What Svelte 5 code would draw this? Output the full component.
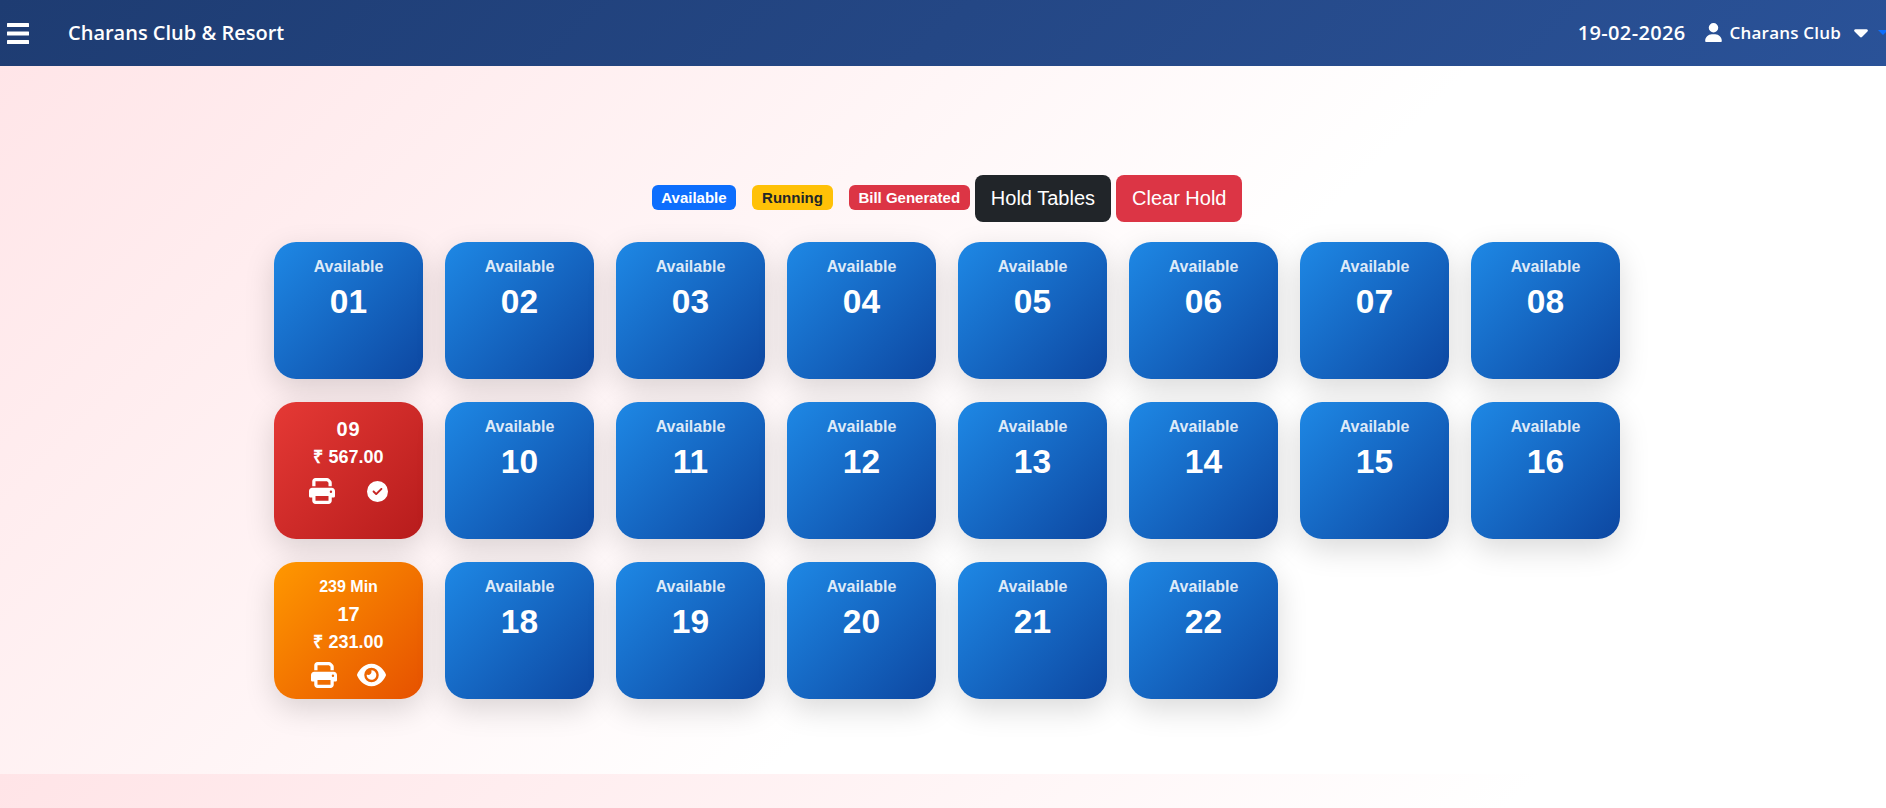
<script>
  const pad = (n) => String(n).padStart(2, '0');
  const tables = Array.from({ length: 22 }, (_, i) => i + 1);
  const print = 'M128 0C92.7 0 64 28.7 64 64v96h64V64H354.7L384 93.3V160h64V93.3c0-17-6.7-33.3-18.7-45.3L400 18.7C388 6.7 371.7 0 354.7 0H128zM384 352v32 64H128V384 368 352H384zm64 32h32c17.7 0 32-14.3 32-32V256c0-35.3-28.7-64-64-64H64c-35.3 0-64 28.7-64 64v96c0 17.7 14.3 32 32 32H64v64c0 35.3 28.7 64 64 64H384c35.3 0 64-28.7 64-64V384zM432 248a24 24 0 1 1 0 48 24 24 0 1 1 0-48z';
  const eye = 'M288 32c-80.8 0-145.5 36.8-192.6 80.6C48.6 156 17.3 208 2.5 243.7c-3.3 7.9-3.3 16.7 0 24.6C17.3 304 48.6 356 95.4 399.4C142.5 443.2 207.2 480 288 480s145.5-36.8 192.6-80.6c46.8-43.5 78.1-95.4 93-131.1c3.3-7.9 3.3-16.7 0-24.6c-14.9-35.7-46.2-87.7-93-131.1C433.5 68.8 368.8 32 288 32zM144 256a144 144 0 1 1 288 0 144 144 0 1 1 -288 0zm144-64c0 35.3-28.7 64-64 64c-7.1 0-13.9-1.2-20.3-3.3c-5.5-1.8-11.9 1.6-11.7 7.4c.3 6.9 1.3 13.8 3.2 20.7c13.7 51.2 66.4 81.6 117.6 67.9s81.6-66.4 67.9-117.6c-11.1-41.5-47.8-69.4-88.6-71.1c-5.8-.2-9.2 6.1-7.4 11.7c2.1 6.4 3.3 13.2 3.3 20.3z';
  const check = 'M256 512A256 256 0 1 0 256 0a256 256 0 1 0 0 512zM369 209L241 337c-9.4 9.4-24.6 9.4-33.9 0l-64-64c-9.4-9.4-9.4-24.6 0-33.9s24.6-9.4 33.9 0l47 47L335 175c9.4-9.4 24.6-9.4 33.9 0s9.4 24.6 0 33.9z';
</script>

<header class="topbar">
  <div class="brand">
    <svg class="menu" viewBox="0 0 22 21" aria-hidden="true">
      <rect y="0" width="22" height="4" rx="0.5" />
      <rect y="8.5" width="22" height="4" rx="0.5" />
      <rect y="17" width="22" height="4" rx="0.5" />
    </svg>
    <span class="title">Charans Club &amp; Resort</span>
  </div>
  <div class="account">
    <span class="date">19-02-2026</span>
    <svg class="user" viewBox="0 0 448 512" aria-hidden="true"><path d="M224 256A128 128 0 1 0 224 0a128 128 0 1 0 0 256zm-45.7 48C79.8 304 0 383.8 0 482.3C0 498.7 13.3 512 29.7 512H418.3c16.4 0 29.7-13.3 29.7-29.7C448 383.8 368.2 304 269.7 304H178.3z" /></svg>
    <span class="name">Charans Club</span>
    <svg class="caret" viewBox="0 0 320 512" aria-hidden="true"><path d="M137.4 374.6c12.5 12.5 32.8 12.5 45.3 0l128-128c9.2-9.2 11.9-22.9 6.9-34.9s-16.6-19.8-29.6-19.8L32 192c-12.9 0-24.6 7.8-29.6 19.8s-2.2 25.7 6.9 34.9l128 128z" /></svg>
    <span class="toggle"></span>
  </div>
</header>

<main class="floor">
  <div class="legend">
    <span class="badge blue">Available</span>
    <span class="badge yellow">Running</span>
    <span class="badge red">Bill Generated</span>
    <button class="btn dark">Hold Tables</button>
    <button class="btn danger">Clear Hold</button>
  </div>

  <div class="grid">
    {#each tables as t}
      {#if t === 9}
        <div class="card billed">
          <div class="mid first">{pad(t)}</div>
          <div class="amount">₹ 567.00</div>
          <div class="icons wide">
            <svg class="ic" viewBox="0 0 512 512" aria-hidden="true"><path d={print} /></svg>
            <svg class="ok" viewBox="0 0 512 512" aria-hidden="true"><path d={check} /></svg>
          </div>
        </div>
      {:else if t === 17}
        <div class="card running">
          <div class="status">239 Min</div>
          <div class="mid second">{t}</div>
          <div class="amount">₹ 231.00</div>
          <div class="icons">
            <svg class="ic" viewBox="0 0 512 512" aria-hidden="true"><path d={print} /></svg>
            <svg class="ic eye" viewBox="0 0 576 512" aria-hidden="true"><path d={eye} /></svg>
          </div>
        </div>
      {:else}
        <div class="card free">
          <div class="status soft">Available</div>
          <div class="num">{pad(t)}</div>
        </div>
      {/if}
    {/each}
  </div>
</main>

<style>
  :global(body) {
    margin: 0;
    font-family: "Liberation Sans", Arial, sans-serif;
    background: linear-gradient(135deg, #ffe4e7 0%, #ffffff 58%);
  }
  .topbar {
    height: 66px;
    box-sizing: border-box;
    display: flex;
    align-items: center;
    justify-content: space-between;
    padding: 0 0 2px 7px;
    overflow: hidden;
    background: linear-gradient(135deg, #1e3c72, #2a5298);
    color: #fff;
    font-family: "Open Sans", "Noto Sans", sans-serif;
    font-weight: 600;
  }
  .brand { display: flex; align-items: center; }
  .menu { width: 22px; height: 21px; fill: #fff; margin: 2px 39px 0 0; }
  .title { font-size: 20px; }
  .account { display: flex; align-items: center; flex: none; margin-right: -2px; }
  .date { font-size: 20px; letter-spacing: 0.35px; margin-right: 19px; }
  .user { width: 17px; height: 19px; fill: #fff; margin-right: 8px; }
  .name { font-size: 17px; letter-spacing: 0.2px; margin-right: 13px; }
  .caret { width: 14px; height: 22px; fill: #fff; margin-right: 10px; }
  .toggle {
    width: 0;
    height: 0;
    border-top: 5.5px solid #0d6efd;
    border-left: 5.5px solid transparent;
    border-right: 5.5px solid transparent;
  }
  .floor {
    height: 708px;
    box-sizing: border-box;
    padding: 109px 0 0 8px;
  }
  .legend {
    display: flex;
    align-items: center;
    justify-content: center;
    gap: 5px;
    margin-bottom: 20px;
  }
  .badge {
    font-size: 15px;
    font-weight: 700;
    line-height: 25px;
    padding: 0 9.75px;
    border-radius: 6px;
    color: #fff;
    margin: 0 11px 2px 0;
  }
  .badge.red { margin-right: 0; }
  .blue { background: #0d6efd; }
  .yellow { background: #ffc107; color: #212529; }
  .red { background: #dc3545; }
  .btn {
    font-family: inherit;
    font-size: 20px;
    line-height: 30px;
    padding: 8px 16px 9px;
    border: 0;
    border-radius: 8px;
    color: #fff;
  }
  .dark { background: #212529; }
  .danger { background: #dc3545; }
  .grid {
    display: grid;
    grid-template-columns: repeat(8, 148.5px);
    grid-auto-rows: 137px;
    gap: 23px 22.5px;
    justify-content: center;
  }
  .card {
    border-radius: 22px;
    color: #fff;
    font-weight: 700;
    text-align: center;
    box-sizing: border-box;
    padding-top: 13px;
    box-shadow: 0 10px 30px rgba(0, 0, 0, 0.15);
    display: flex;
    flex-direction: column;
    align-items: center;
  }
  .free { background: linear-gradient(135deg, #1e88e5, #0d47a1); }
  .billed { background: linear-gradient(135deg, #e53935, #b71c1c); }
  .running { background: linear-gradient(135deg, #ff9800, #e65100); }
  .status { font-size: 16px; line-height: 24px; }
  .soft { opacity: 0.85; }
  .num { font-size: 33.5px; line-height: 42px; margin-top: 2px; }
  .mid { font-size: 20px; line-height: 28px; }
  .mid.first { letter-spacing: 1px; }
  .mid.second { margin-top: 1px; }
  .amount { font-size: 18px; line-height: 28px; }
  .icons { display: flex; align-items: center; gap: 20px; margin-top: 6px; }
  .icons.wide { gap: 32px; margin-top: 7px; }
  .ic { width: 26px; height: 26px; fill: #fff; }
  .eye { width: 29px; }
  .ok { width: 21px; height: 21px; fill: #fff; margin-top: 1px; }
</style>
